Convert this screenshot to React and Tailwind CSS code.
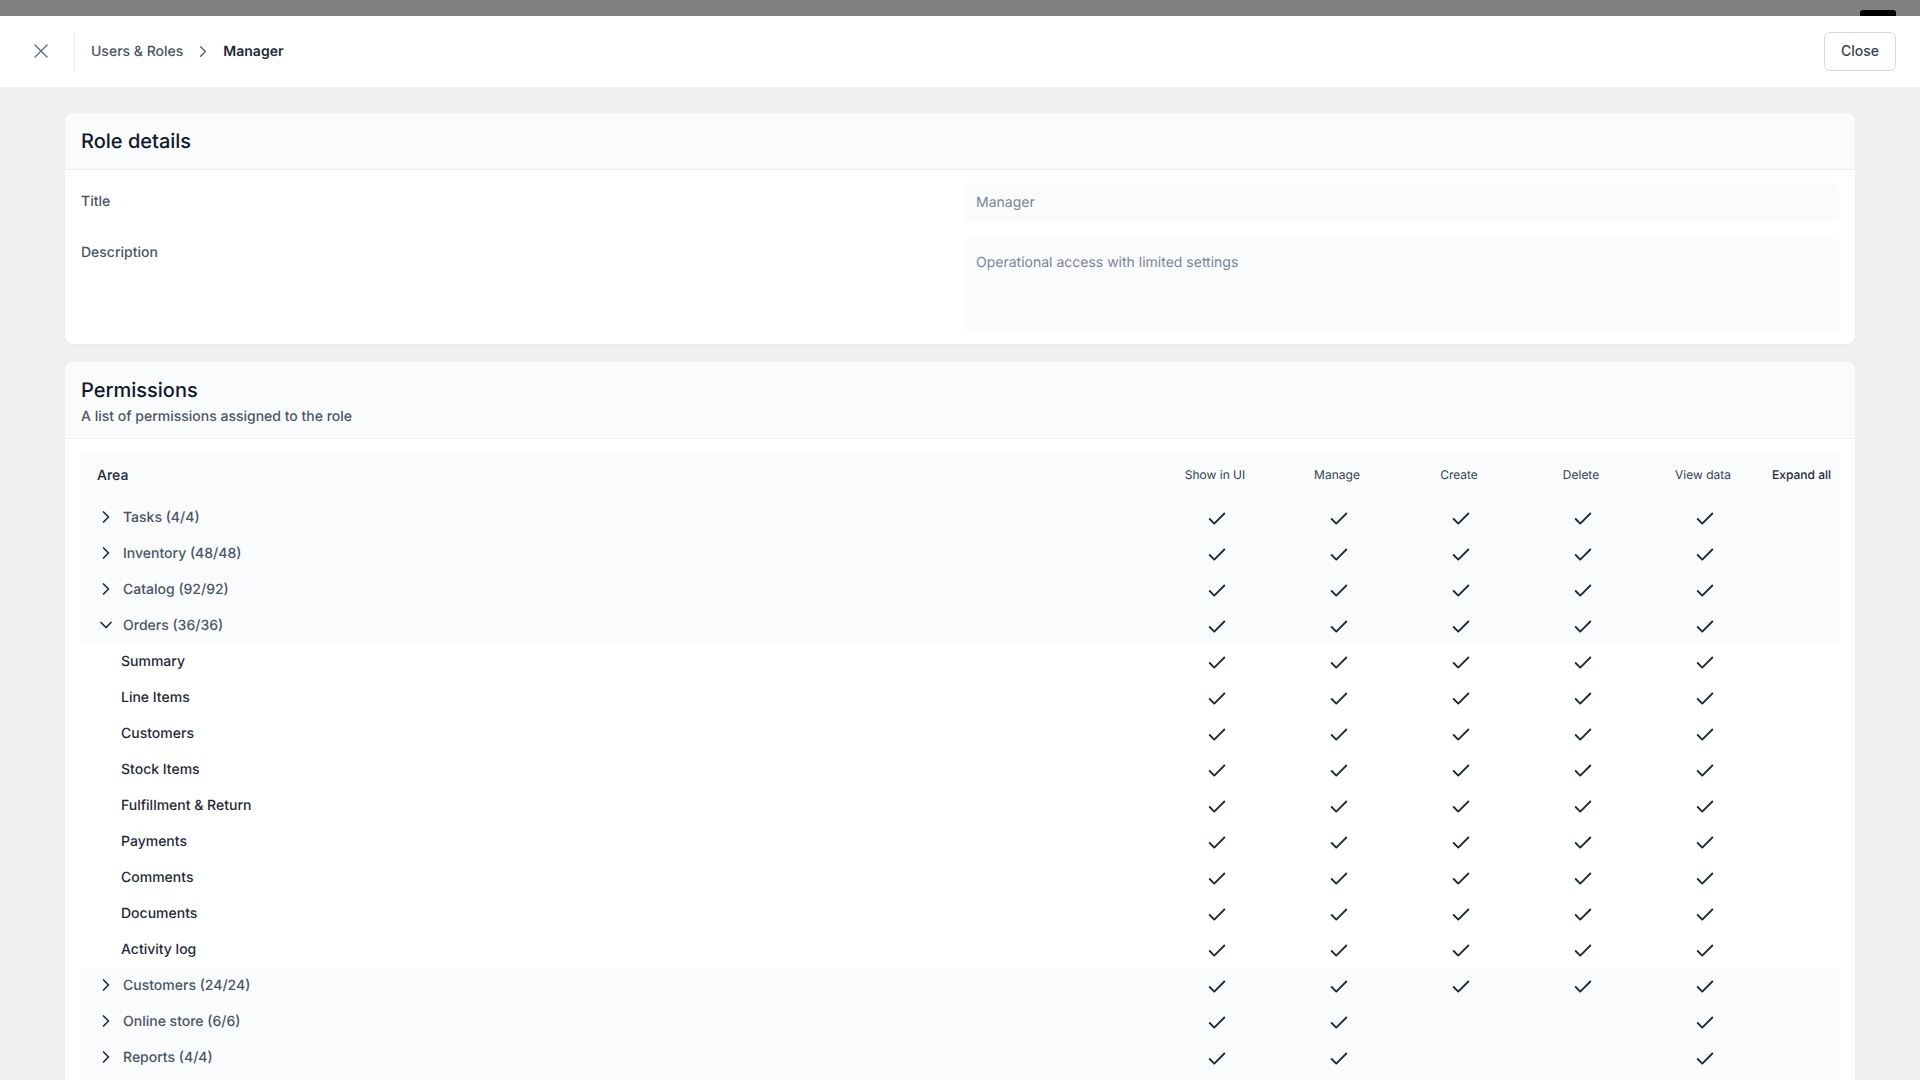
import React from "react";
import { X, ChevronRight, ChevronDown, Check } from "lucide-react";

const All = [1, 1, 1, 1, 1];
const Limited = [1, 1, 0, 0, 1];

const rows = [
  { kind: "group", label: "Tasks (4/4)", checks: All },
  { kind: "group", label: "Inventory (48/48)", checks: All },
  { kind: "group", label: "Catalog (92/92)", checks: All },
  { kind: "group", label: "Orders (36/36)", checks: All, open: true },
  { kind: "sub", label: "Summary", checks: All },
  { kind: "sub", label: "Line Items", checks: All },
  { kind: "sub", label: "Customers", checks: All },
  { kind: "sub", label: "Stock Items", checks: All },
  { kind: "sub", label: "Fulfillment & Return", checks: All },
  { kind: "sub", label: "Payments", checks: All },
  { kind: "sub", label: "Comments", checks: All },
  { kind: "sub", label: "Documents", checks: All },
  { kind: "sub", label: "Activity log", checks: All },
  { kind: "group", label: "Customers (24/24)", checks: All },
  { kind: "group", label: "Online store (6/6)", checks: Limited },
  { kind: "group", label: "Reports (4/4)", checks: Limited },
];

const gridCols = "grid grid-cols-[1fr_repeat(5,122px)_75px]";

function HeaderCell({ children }) {
  return <div className="pb-[2px] text-center text-xs text-[#374151]">{children}</div>;
}

function Row({ row }) {
  const group = row.kind === "group";
  return (
    <div className={`${gridCols} h-9 items-center ${group ? "bg-[#f9fbfd]" : "bg-white"}`}>
      {group ? (
        <div className="flex items-center pb-[1px] pl-[15px] text-sm font-[450] text-[#4b5563]">
          {row.open ? (
            <ChevronDown size={20} strokeWidth={2} className="mb-[1px] text-[#1f2937]" />
          ) : (
            <ChevronRight size={20} strokeWidth={2} className="mb-[1px] text-[#1f2937]" />
          )}
          <span className="ml-[7px]">{row.label}</span>
        </div>
      ) : (
        <div className="pb-[1px] pl-[40px] text-sm font-medium text-[#1f2937]">{row.label}</div>
      )}
      {row.checks.map((on, i) => (
        <div key={i} className="flex justify-center pl-[3px] pt-[2px]">
          {on ? <Check size={22} strokeWidth={2} className="text-[#1f2937]" /> : <span className="h-[22px] w-[22px]" />}
        </div>
      ))}
      <div />
    </div>
  );
}

export default function App() {
  return (
    <div className="relative flex h-screen flex-col overflow-hidden bg-[#f0f0f0] font-['Inter',sans-serif] [text-rendering:geometricPrecision]">
      <div className="relative h-4 shrink-0 bg-[#808080]">
        <div className="absolute bottom-0 right-6 h-[6px] w-9 rounded-t-[3px] bg-black" />
      </div>

      <header className="flex h-[71px] shrink-0 items-center bg-white pl-[29px] pr-6">
        <X size={24} strokeWidth={1.5} className="mb-[1px] text-[#6b7280]" />
        <div className="ml-[21px] h-10 w-px bg-[#f0f0f0]" />
        <span className="ml-4 text-sm font-[450] text-[#4b5563]">Users &amp; Roles</span>
        <ChevronRight size={20} strokeWidth={1.5} className="ml-[10px] pb-[1px] text-[#4b5563]" />
        <span className="ml-[10px] text-sm font-semibold text-[#1f2937]">Manager</span>
        <button className="ml-auto h-[39px] w-[72px] rounded-md border border-[#d9d9d9] bg-white pb-[1px] text-sm font-medium text-[#374151]">
          Close
        </button>
      </header>

      <main className="flex flex-col gap-[18px] px-[65px] pt-[26px]">
        <section className="h-[231px] shrink-0 overflow-hidden rounded-lg bg-white shadow-[0_1px_2px_rgba(0,0,0,0.03)]">
          <div className="flex h-[57px] items-center border-b border-[#eef0f2] bg-[#f9fbfd] px-4 text-xl font-medium text-[#111827]">
            Role details
          </div>
          <div className="grid grid-cols-[883px_1fr] px-4 pt-[13px]">
            <div className="flex h-[39px] items-center pb-[2px] text-sm font-[450] text-[#4b5563]">Title</div>
            <div className="flex h-[39px] items-center rounded-md bg-[#f9fbfd] px-3 text-sm text-[#7b8494]">Manager</div>
            <div className="mt-[16px] pt-[5px] text-sm font-[450] text-[#4b5563]">Description</div>
            <div className="mt-[16px] h-[94px] rounded-md bg-[#f9fbfd] px-3 pt-[15px] text-sm text-[#7b8494]">
              Operational access with limited settings
            </div>
          </div>
        </section>

        <section className="overflow-hidden rounded-t-lg bg-white">
          <div className="flex h-[77px] flex-col justify-center border-b border-[#eef0f2] bg-[#f9fbfd] px-4 pt-[3px]">
            <div className="text-xl font-medium text-[#111827]">Permissions</div>
            <div className="mt-[3px] text-sm font-[450] text-[#4b5563]">A list of permissions assigned to the role</div>
          </div>
          <div className="px-4 pt-[13px]">
            <div className={`${gridCols} h-12 items-center rounded-t-md bg-[#f9fbfd]`}>
              <div className="pb-[1px] pl-4 text-sm font-medium text-[#1f2937]">Area</div>
              <HeaderCell>Show in UI</HeaderCell>
              <HeaderCell>Manage</HeaderCell>
              <HeaderCell>Create</HeaderCell>
              <HeaderCell>Delete</HeaderCell>
              <HeaderCell>View data</HeaderCell>
              <div className="whitespace-nowrap pb-[2px] pr-2 text-right text-xs font-medium text-[#1f2937]">Expand all</div>
            </div>
            {rows.map((r) => (
              <Row key={r.label + r.kind} row={r} />
            ))}
            <div className="h-9 bg-[#f9fbfd]" />
          </div>
        </section>
      </main>
    </div>
  );
}
